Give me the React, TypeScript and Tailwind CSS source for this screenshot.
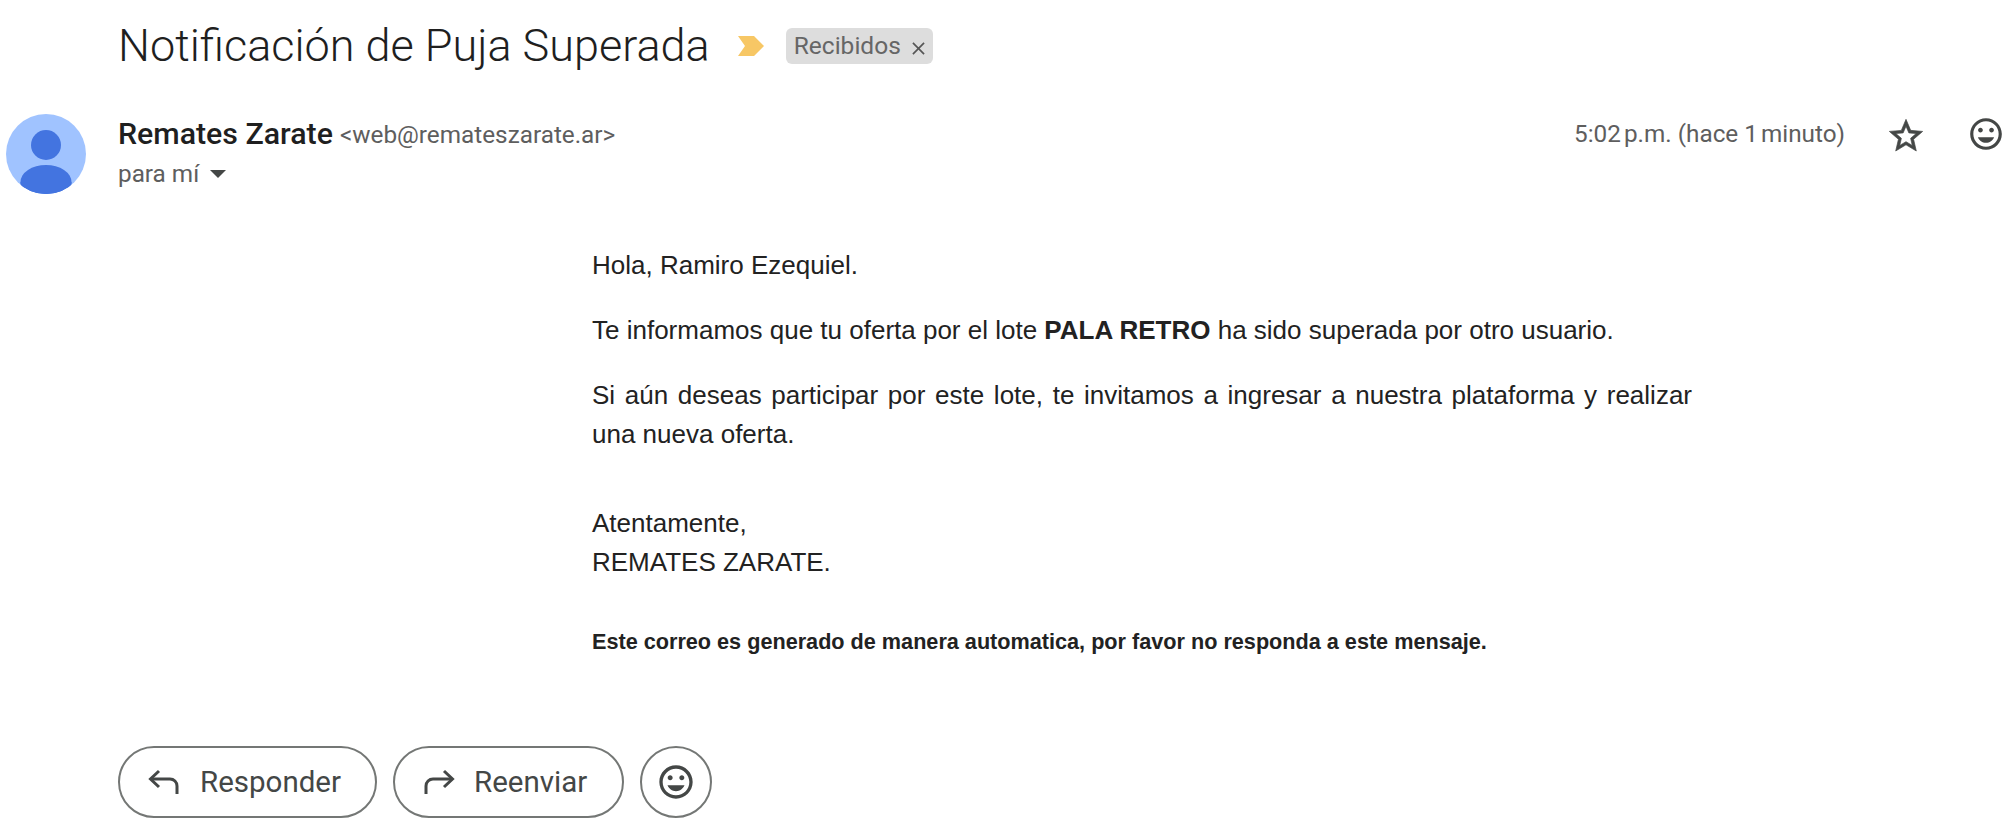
const MOOD =
  'M12 2C6.47 2 2 6.47 2 12s4.47 10 10 10 10-4.47 10-10S17.53 2 12 2zm0 18c-4.41 0-8-3.59-8-8s3.59-8 8-8 8 3.59 8 8-3.59 8-8 8zm3.5-9c.83 0 1.5-.67 1.5-1.5S16.33 8 15.5 8 14 8.67 14 9.5s.67 1.5 1.5 1.5zm-7 0c.83 0 1.5-.67 1.5-1.5S9.33 8 8.5 8 7 8.67 7 9.5 7.67 11 8.5 11zm3.5 6.5c2.33 0 4.31-1.46 5.11-3.5H6.89c.8 2.04 2.78 3.5 5.11 3.5z';
const STAR =
  'M22 9.24l-7.19-.62L12 2 9.19 8.63 2 9.24l5.46 4.73L5.82 21 12 17.27 18.18 21l-1.63-7.03L22 9.24zM12 15.4l-3.76 2.27 1-4.28-3.32-2.88 4.38-.38L12 6.1l1.71 4.04 4.38.38-3.32 2.88 1 4.28L12 15.4z';

const Mood = ({ className }: { className: string }) => (
  <svg viewBox="0 0 24 24" className={className} fill="#444746">
    <path d={MOOD} />
  </svg>
);

const Avatar = () => (
  <svg viewBox="0 0 80 80" className="w-20 h-20 shrink-0">
    <defs>
      <clipPath id="avatar-clip">
        <circle cx="40" cy="40" r="40" />
      </clipPath>
    </defs>
    <circle cx="40" cy="40" r="40" fill="#a0c3ff" />
    <g clipPath="url(#avatar-clip)" fill="#4374e0">
      <circle cx="40" cy="31" r="15" />
      <ellipse cx="40" cy="68" rx="25.5" ry="17" />
      <rect x="14.5" y="68" width="51" height="14" />
    </g>
  </svg>
);

const ReplyIcon = () => (
  <svg viewBox="0 0 32 32" className="w-8 h-8" fill="none" stroke="#444746" strokeWidth="3">
    <path d="M11 5 2.5 13 11 21" />
    <path d="M3 13H22a7 7 0 0 1 7 7V28" />
  </svg>
);

const ForwardIcon = () => (
  <svg viewBox="0 0 32 32" className="w-8 h-8" fill="none" stroke="#444746" strokeWidth="3">
    <path d="M21 5l8.5 8-8.5 8" />
    <path d="M29 13H10a7 7 0 0 0-7 7V28" />
  </svg>
);

const ActionButton = ({ label, icon, className }: { label: string; icon: React.ReactNode; className: string }) => (
  <div className={`h-[72px] flex items-center rounded-full border-2 border-[#747775] ${className}`}>
    {icon}
    <span className="text-[29.5px] text-[#444746]">{label}</span>
  </div>
);

export default function App() {
  return (
    <div className="w-[2005px] h-[837px] overflow-hidden bg-white font-['Roboto',sans-serif]">
      {/* Asunto */}
      <div className="pl-[118px] pt-[16px] h-[114px]">
        <div className="flex items-center h-[60px]">
          <h1 className="text-[45px] leading-[60px] font-light text-[#1f1f1f]">
            Notificación de Puja Superada
          </h1>
          <svg viewBox="0 0 26 20" className="w-[26px] h-5 ml-[28px]">
            <path d="M0 0h16l10 10-10 10H0l7-10z" fill="#f7c765" />
          </svg>
          <div className="ml-[22px] h-9 px-2 flex items-center rounded-md bg-[#dddddd] text-[24.5px] text-[#666666]">
            Recibidos
            <svg viewBox="0 0 14 14" className="w-[13px] h-[13px] ml-[11px] mt-[4px]" stroke="#555555" strokeWidth="1.8">
              <path d="M1 1l12 12M13 1 1 13" />
            </svg>
          </div>
        </div>
      </div>

      {/* Remitente */}
      <div className="flex pl-[6px] h-[80px]">
        <Avatar />
        <div className="ml-[32px] flex-1">
          <div className="flex items-baseline h-[40px] leading-[40px]">
            <span className="text-[30.3px] font-medium text-[#1f1f1f]">Remates Zarate</span>
            <span className="ml-[7px] text-[24.3px] text-[#5e5e5e] -translate-y-px">&lt;web@remateszarate.ar&gt;</span>
          </div>
          <div className="flex items-center h-[40px] text-[24.3px] text-[#5e5e5e]">
            para mí
            <svg viewBox="0 0 16 8" className="w-4 h-2 ml-[11px]" fill="#444746">
              <path d="M0 0h16L8 8z" />
            </svg>
          </div>
        </div>
        <div className="flex items-start h-[40px]">
          <span className="text-[24.3px] leading-[40px] text-[#5e5e5e] whitespace-nowrap">5:02{'\u202f'}p.m. (hace 1{'\u202f'}minuto)</span>
          <svg viewBox="0 0 24 24" className="w-10 h-10 ml-[41px] mt-[2px]" fill="#444746" stroke="#444746" strokeWidth="0.4">
            <path d={STAR} />
          </svg>
          <Mood className="w-[38px] h-[38px] ml-[41px] mt-[1px]" />
        </div>
      </div>

      {/* Cuerpo */}
      <div className="ml-[592px] w-[1100px] mt-[52px] font-['Liberation_Sans',sans-serif] text-[26px] leading-[39px] text-[#222222]">
        <p>Hola, Ramiro Ezequiel.</p>
        <p className="mt-[26px]">
          Te informamos que tu oferta por el lote <b>PALA RETRO</b> ha sido superada por otro usuario.
        </p>
        <p className="mt-[26px] text-justify">
          Si aún deseas participar por este lote, te invitamos a ingresar a nuestra plataforma y realizar una nueva oferta.
        </p>
        <p className="mt-[50px]">
          Atentamente,
          <br />
          REMATES ZARATE.
        </p>
        <p className="mt-[40px] text-[21.65px] font-bold">
          Este correo es generado de manera automatica, por favor no responda a este mensaje.
        </p>
      </div>

      {/* Acciones */}
      <div className="flex gap-4 pl-[118px] mt-[85px]">
        <ActionButton label="Responder" icon={<ReplyIcon />} className="w-[259px] pl-[28px] gap-[20px]" />
        <ActionButton label="Reenviar" icon={<ForwardIcon />} className="w-[231px] pl-[28px] gap-[19px]" />
        <div className="w-[72px] h-[72px] flex items-center justify-center rounded-full border-2 border-[#747775]">
          <Mood className="w-10 h-10" />
        </div>
      </div>
    </div>
  );
}
